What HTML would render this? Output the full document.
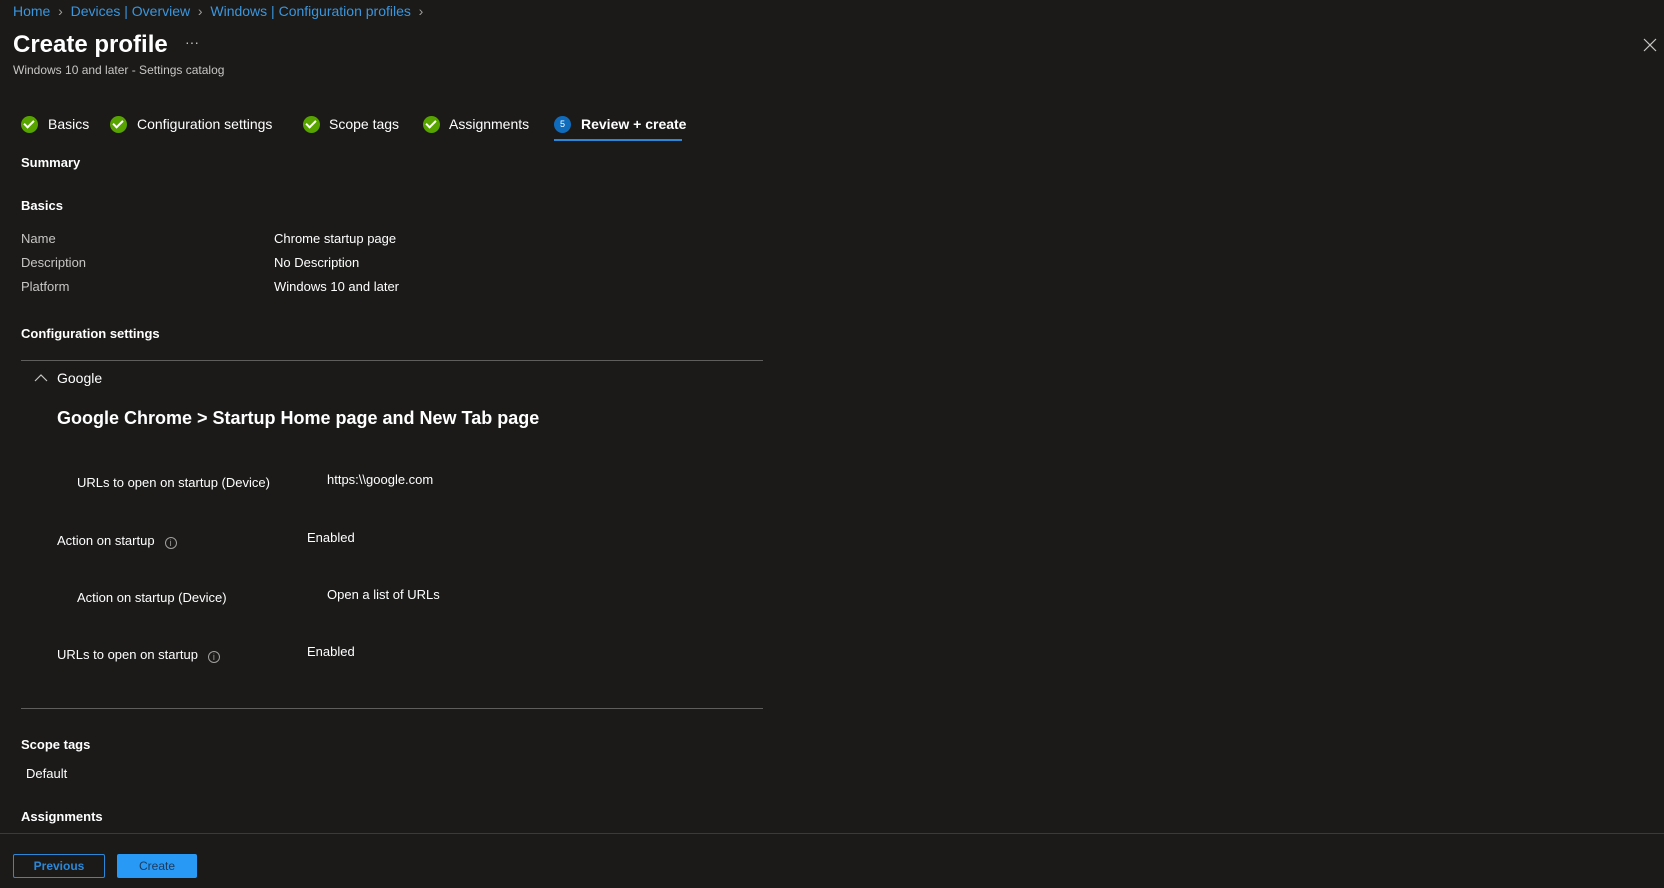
<!DOCTYPE html>
<html><head><meta charset="utf-8"><style>
*{margin:0;padding:0;box-sizing:border-box}
body{width:1664px;height:888px;background:#1b1a19;color:#fff;font-family:"Liberation Sans",sans-serif;font-size:13px;position:relative;overflow:hidden}
.a{position:absolute;white-space:nowrap}
.b{font-weight:bold}
.g{color:#c8c6c4}
.lnk{color:#3a96dd;font-size:14px}
.chk{position:absolute;width:17px;height:17px;border-radius:50%;background:#57a300;top:116px}
.chk:after{content:"";position:absolute;left:5px;top:2px;width:4px;height:8px;border:solid #fff;border-width:0 2px 2px 0;transform:rotate(45deg)}
.tab{top:116px;font-size:14px}
.info{display:inline-block;width:12px;height:12px;border:1px solid #a19f9d;border-radius:50%;font-size:9px;text-align:center;line-height:10px;color:#a19f9d;margin-left:10px;vertical-align:-1px}
</style></head><body>
<div class="a lnk" style="left:13px;top:3px">Home <span style="color:#a19f9d">&nbsp;›&nbsp;</span> Devices | Overview <span style="color:#a19f9d">&nbsp;›&nbsp;</span> Windows | Configuration profiles <span style="color:#a19f9d">&nbsp;›</span></div>
<div class="a b" style="left:13px;top:31px;font-size:24px">Create profile</div>
<div class="a g" style="left:185px;top:34px;font-size:14px">···</div>
<div class="a g" style="left:13px;top:63px;font-size:12px">Windows 10 and later - Settings catalog</div>
<svg class="a" style="left:1643px;top:38px" width="14" height="14" viewBox="0 0 14 14"><path d="M1 1L13 13M13 1L1 13" stroke="#c8c6c4" stroke-width="1.2"/></svg>

<div class="chk" style="left:21px"></div><div class="a tab" style="left:48px">Basics</div>
<div class="chk" style="left:110px"></div><div class="a tab" style="left:137px">Configuration settings</div>
<div class="chk" style="left:303px"></div><div class="a tab" style="left:329px">Scope tags</div>
<div class="chk" style="left:423px"></div><div class="a tab" style="left:449px">Assignments</div>
<div class="a" style="left:554px;top:116px;width:17px;height:17px;border-radius:50%;background:#0f6cbd;font-size:9px;text-align:center;line-height:17px">5</div>
<div class="a tab b" style="left:581px">Review + create</div>
<div class="a" style="left:554px;top:139px;width:128px;height:2px;background:#2b88d8"></div>

<div class="a b" style="left:21px;top:155px">Summary</div>
<div class="a b" style="left:21px;top:198px">Basics</div>
<div class="a g" style="left:21px;top:231px">Name</div><div class="a" style="left:274px;top:231px">Chrome startup page</div>
<div class="a g" style="left:21px;top:255px">Description</div><div class="a" style="left:274px;top:255px">No Description</div>
<div class="a g" style="left:21px;top:279px">Platform</div><div class="a" style="left:274px;top:279px">Windows 10 and later</div>
<div class="a b" style="left:21px;top:326px">Configuration settings</div>
<div class="a" style="left:21px;top:360px;width:742px;height:1px;background:#605e5c"></div>
<svg class="a" style="left:34px;top:374px" width="14" height="8" viewBox="0 0 14 8"><path d="M1 7L7 1L13 7" stroke="#c8c6c4" fill="none" stroke-width="1.2"/></svg>
<div class="a" style="left:57px;top:370px;font-size:14px">Google</div>
<div class="a b" style="left:57px;top:408px;font-size:18px">Google Chrome &gt; Startup Home page and New Tab page</div>
<div class="a" style="left:77px;top:475px">URLs to open on startup (Device)</div><div class="a" style="left:327px;top:472px">https:\\google.com</div>
<div class="a" style="left:57px;top:533px">Action on startup<span class="info">i</span></div><div class="a" style="left:307px;top:530px">Enabled</div>
<div class="a" style="left:77px;top:590px">Action on startup (Device)</div><div class="a" style="left:327px;top:587px">Open a list of URLs</div>
<div class="a" style="left:57px;top:647px">URLs to open on startup<span class="info">i</span></div><div class="a" style="left:307px;top:644px">Enabled</div>
<div class="a" style="left:21px;top:708px;width:742px;height:1px;background:#605e5c"></div>
<div class="a b" style="left:21px;top:737px">Scope tags</div>
<div class="a" style="left:26px;top:766px">Default</div>
<div class="a b" style="left:21px;top:809px">Assignments</div>
<div class="a" style="left:0;top:833px;width:1664px;height:1px;background:#3b3a39"></div>
<div class="a b" style="left:13px;top:854px;width:92px;height:24px;border:1px solid #2b88d8;border-radius:2px;color:#2b88d8;text-align:center;line-height:22px;font-size:12px">Previous</div>
<div class="a" style="left:117px;top:854px;width:80px;height:24px;background:#2899f5;border-radius:2px;color:#1b3a5c;text-align:center;line-height:24px;font-size:12px">Create</div>
</body></html>
